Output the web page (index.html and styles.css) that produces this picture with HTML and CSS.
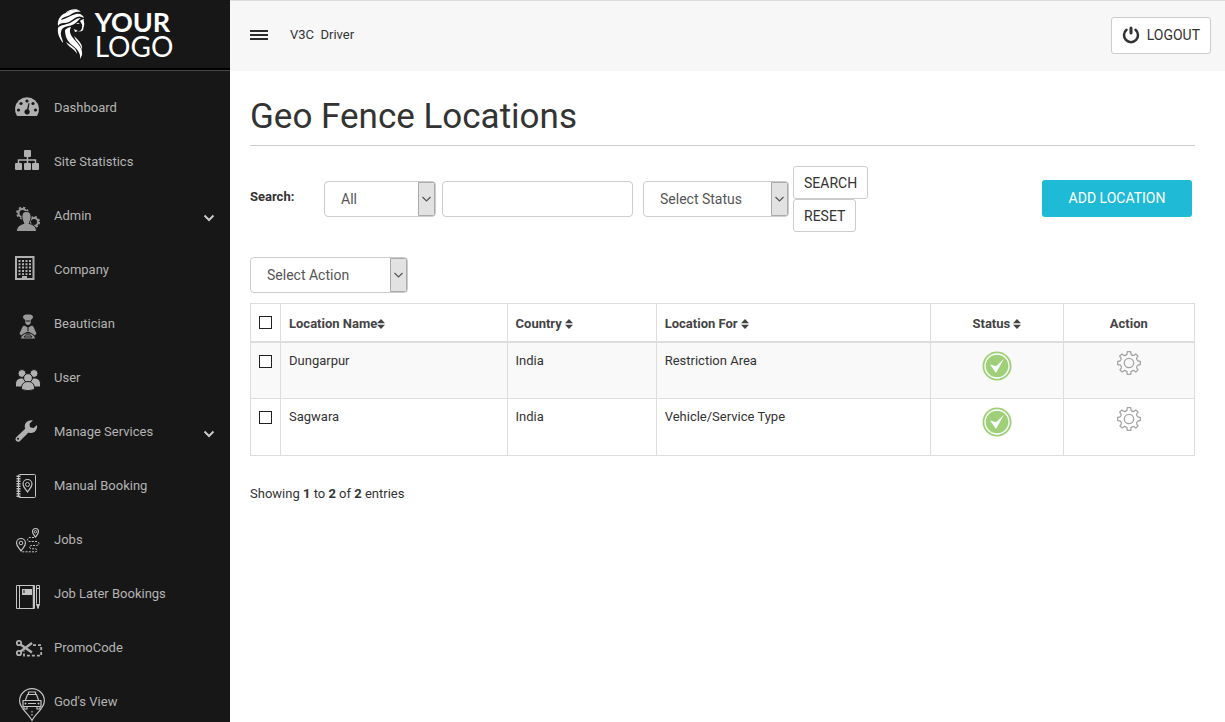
FILE: index.html
```html
<!DOCTYPE html>
<html lang="en">
<head>
<meta charset="utf-8">
<meta name="viewport" content="width=device-width, initial-scale=1">
<title>Geo Fence Locations</title>
<link rel="stylesheet" href="styles.css">
</head>
<body>
<svg class="defs" aria-hidden="true">
  <symbol id="sort" viewBox="0 0 8 10"><path d="M4 0L8 4.2H0zM0 5.8h8L4 10z"/></symbol>
  <symbol id="chevron" viewBox="0 0 12 8"><path d="M1.500 1.500L6 6l4.500-4.500" fill="none" stroke="currentColor" stroke-width="2"/></symbol>
  <symbol id="tick" viewBox="0 0 30 30">
    <circle cx="15" cy="15" r="14.500" fill="#9fd079"/>
    <circle cx="15" cy="15" r="12" fill="none" stroke="#fff" stroke-width="1.300"/>
    <path d="M8 13.500l6 1.800 7.800-7.300L14 22z" fill="#fff"/>
  </symbol>
  <symbol id="gear" viewBox="0 0 24 24">
    <g fill="none" stroke="#a4a4a4" stroke-width="1.300" stroke-linejoin="round">
      <path d="M10 3.200L10.300.7h3.400l.3 2.500q1.600 1.700 2.800 1.200l2-1.500 2.300 2.300-1.500 2q-.4 1.400 1.500 2.800l2.200.3v3.400l-2.200.3q-1.900 1.400-1.500 2.800l1.500 2-2.300 2.300-2-1.500q-1.200-.5-2.800 1.200l-.3 2.500h-3.400l-.3-2.500q-1.600-1.700-2.800-1.200l-2 1.500-2.300-2.300 1.500-2q.4-1.400-1.200-2.800L.7 13.700v-3.400l2.200-.3q1.600-1.400 1.200-2.800l-1.500-2 2.300-2.300 2 1.500Q8.400 4.900 10 3.200z"/>
      <circle cx="12" cy="12" r="4.700"/>
    </g>
  </symbol>
</svg>

<aside class="sidebar">
  <a class="brand" href="#" aria-label="Your logo">
    <svg class="brand-mark" viewBox="0 0 28 50" fill="#fff" aria-hidden="true">
      <path d="M1 17C0 10 4 5 11 3 15 1 20 0 24 3c-5-1-8 1-11 3-4 2-8 2-9 5 5-1 10-5 15-6 4-1 7 1 8 4-3-2-6-2-9 0-4 3-7 5-11 5-3 0-5 1-6 3z"/>
      <path d="M8 4C12 0 20-1 23 2 18 0 13 2 8 4z"/>
      <path d="M1 19c2-3 6-3 9-4 5-1 8-6 14-6-3 2-5 6-9 7-5 2-10 1-11 7-1 4 2 7 2 11-3-4-6-9-5-15z"/>
      <path d="M8 21c2-2 4-3 6-3-2 4-1 7 2 11 5 6 10 10 9 17l-2 4c1-6-3-10-8-14C10 32 8 27 8 21z"/>
      <path d="M9 33c4 3 11 6 11 12-2-5-9-7-11-12zM17 27c5 5 9 8 8 14-1-6-6-8-8-14z"/>
      <path d="M23 12c1-1 3-2 4-2-1 2 1 4 0 7-1 2 0 4-2 5l-4 1c3-1 4-3 4-5 1-2-1-4-2-6zM19 14l4 0-2 1zM17 20l4 2-3 1z"/>
    </svg>
    <span class="brand-name"><b>YOUR</b><span>LOGO</span></span>
  </a>
  <nav class="nav">
    <a href="#"><svg class="nav-icon" viewBox="0 0 54 54" aria-hidden="true"><path fill="currentColor" d="M17 35a12 12 0 1 1 20 0z"/><g fill="#171717"><circle cx="18.500" cy="29" r="1.600"/><circle cx="21" cy="22.500" r="1.600"/><circle cx="27" cy="20" r="1.600"/><circle cx="33" cy="22.500" r="1.600"/><circle cx="35.500" cy="29" r="1.600"/><path d="M28.500 22l1 .4-1 6.200a2.700 2.700 0 1 1-1.500-.4z"/></g></svg>Dashboard</a>
    <a href="#"><svg class="nav-icon" viewBox="0 0 54 54" aria-hidden="true"><g fill="currentColor"><rect x="24" y="15" width="7" height="7" rx="1"/><rect x="15" y="28" width="7" height="7" rx="1"/><rect x="24" y="28" width="7" height="7" rx="1"/><rect x="32" y="28" width="7" height="7" rx="1"/></g><path d="M27.500 21v8M18.500 29v-4h17v4" fill="none" stroke="currentColor" stroke-width="1.500"/></svg>Site Statistics</a>
    <a href="#"><svg class="nav-icon dim" viewBox="0 0 54 54" aria-hidden="true"><g fill="none" stroke="currentColor"><circle cx="22.500" cy="24" r="4" stroke-width="2"/><circle cx="22.500" cy="24" r="5.500" stroke-width="1.800" stroke-dasharray="2.300 2"/><circle cx="34" cy="33" r="4" stroke-width="2"/><circle cx="34" cy="33" r="5.200" stroke-width="1.800" stroke-dasharray="2.200 1.900"/></g><path d="M26 22.500c4 0 5.300 2.800 5 6-.2 2.700-1.300 4.800-2 5.800 3 1.500 7.500 2.200 7.500 8.200h-20c0-6 4.500-6.700 7.500-8.200-.7-1-1.800-3.100-2-5.800-.3-3.200 1-6 4-6z" fill="currentColor" stroke="#171717"/></svg>Admin<svg class="nav-more" aria-hidden="true"><use href="#chevron"/></svg></a>
    <a href="#"><svg class="nav-icon" viewBox="0 0 54 54" aria-hidden="true"><path d="M16 14h17.500v22H16z" fill="none" stroke="currentColor" stroke-width="2"/><path d="M19.500 17v15M23 17v15M26.500 17v15M30 17v15" fill="none" stroke="currentColor" stroke-width="2" stroke-dasharray="2 1.300"/><path d="M22 33h5v3h-5z" fill="currentColor"/></svg>Company</a>
    <a href="#"><svg class="nav-icon dim" viewBox="0 0 54 54" aria-hidden="true"><path fill="currentColor" d="M23 20c0-2 2-2.500 5-2.500s5 .5 5 2.500c0 1.500-1.500 2-2 3l-.2 2c0 2-1.500 3-2.800 3s-2.800-1-2.800-3l-.2-2c-.5-1-2-1.500-2-3zM24 28.500l4 2 4-2c2 1 2.500 4 4.500 8l-1.500 2-5-3-2-1-2 1-5 3-1.500-2c2-4 2.500-7 4.500-8z"/><path d="M20.500 42c1-8 14-8 15 0z" fill="currentColor" stroke="#171717"/><path d="M25.500 24h5M24 40c1-3 7-3 8 0zM28 29v5" fill="none" stroke="#171717"/></svg>Beautician</a>
    <a href="#"><svg class="nav-icon" viewBox="0 0 54 54" aria-hidden="true"><g fill="currentColor" stroke="#171717"><circle cx="22" cy="22.500" r="4"/><circle cx="34" cy="22.500" r="4"/><path d="M15.500 36v-3c0-4 3-6 6-6s6 2 6 6v3zM28.500 36v-3c0-4 3-6 6-6s6 2 6 6v3z"/><circle cx="28" cy="27" r="4.400"/><path d="M21.500 37c0-4 3-6.500 6.500-6.500s6.500 2.500 6.500 6.500v1.500q-6.500 2.500-13 0z"/></g></svg>User</a>
    <a href="#"><svg class="nav-icon" viewBox="0 0 54 54" aria-hidden="true"><path fill="currentColor" fill-rule="evenodd" d="M33 15.300l-3.500 3.500.5 3.500 3.500.7 3.500-3c.8 3.500-1.500 8-6 8-1 0-1.800 0-2.500-.5l-8.500 8.500c-1.200 1.200-2.800 1-3.800 0s-1-2.600 0-3.700l9-8.600c-1.700-5 2-9.300 7.800-8.400zM18 32.800a1 1 0 1 0 .1 2 1 1 0 0 0 0-2z"/></svg>Manage Services<svg class="nav-more" aria-hidden="true"><use href="#chevron"/></svg></a>
    <a href="#"><svg class="nav-icon light" viewBox="0 0 54 54" aria-hidden="true"><g fill="none" stroke="currentColor"><rect x="18.500" y="15.500" width="17" height="23" rx="1"/><path d="M18.500 16.500v22" stroke-width="4" stroke-dasharray="1.500 1"/><path d="M27.500 33c-2-3-4.500-5-4.500-8a4.500 4.500 0 0 1 9 0c0 3-2.500 5-4.500 8z" stroke-width="1.200"/><circle cx="27.500" cy="25.500" r="2"/></g></svg>Manual Booking</a>
    <a href="#"><svg class="nav-icon light" viewBox="0 0 54 54" aria-hidden="true"><g fill="none" stroke="currentColor"><path d="M21 38c-2-3-4.500-5-4.500-8a4.500 4.500 0 0 1 9 0c0 3-2.500 5-4.500 8z" stroke-width="1.200"/><circle cx="21" cy="30" r="1.800"/><path d="M35.500 24c-1.500-2-3-3.500-3-5.500a3 3 0 0 1 6 0c0 2-1.500 3.500-3 5.500z" stroke-width="1.200"/><circle cx="35.500" cy="18.700" r="1.200"/><path d="M34 24.500h-5q-3 2.500 0 4h8q4 2 0 4h-6q-3 1.500 0 3.300h5q2 2 0 3H21" stroke-dasharray="2 1.200"/></g></svg>Jobs</a>
    <a href="#"><svg class="nav-icon light" viewBox="0 0 54 54" aria-hidden="true"><g fill="none" stroke="currentColor"><path d="M16.500 18.500h18v23h-18zM19.500 18v24"/><path d="M33.500 18v24" stroke-width="1.500"/><path d="M36.500 18.500h3v18l-1.500 5-1.500-5zM36 21.500h4"/></g><path d="M22 22h10v6H22zM36 37h4l-2 5z" fill="currentColor"/><path d="M24 23v3" stroke="#171717"/></svg>Job Later Bookings</a>
    <a href="#"><svg class="nav-icon" viewBox="0 0 54 54" aria-hidden="true"><g fill="none" stroke="currentColor" stroke-width="1.800"><circle cx="19" cy="22" r="2.200"/><circle cx="19" cy="32" r="2.200"/><path d="M20.500 23.500L32 31.500M20.500 30.500L32 22" stroke-width="2.400"/><path d="M33 24.200h8.200v10.500H24v-5" stroke-dasharray="3 2"/></g></svg>PromoCode</a>
    <a href="#"><svg class="nav-icon light" viewBox="0 0 54 54" aria-hidden="true"><g fill="none" stroke="currentColor" stroke-width="1.200"><path d="M32 45.500c-3.500-7-12.400-12-12.400-19.500a12.400 12.400 0 0 1 24.800 0c0 7.500-8.900 12.500-12.400 19.500z"/><path d="M28.500 19v-2h7v2M25.500 25l2-5.500h9l2 5.500M23 25.500h18v6H23zM24 31.500v2.500h3v-2.500M37 31.500v2.500h3v-2.500M28 28.500h8"/><path d="M32 36v6" stroke-dasharray="1.500 1.500"/></g><circle cx="25.500" cy="28.500" r="1" fill="currentColor"/><circle cx="38.500" cy="28.500" r="1" fill="currentColor"/></svg>God's View</a>
  </nav>
</aside>

<div class="page">
  <header class="topbar">
    <button class="menu-btn" type="button" aria-label="Toggle menu"><svg viewBox="0 0 18 10" aria-hidden="true"><path d="M0 1h18M0 5h18M0 9h18" stroke="#2b2b2b" stroke-width="2"/></svg></button>
    <span class="user">V3C&nbsp; Driver</span>
    <button class="btn logout" type="button"><svg viewBox="0 0 18 18" fill="none" stroke="#333" stroke-width="2.500" stroke-linecap="round" aria-hidden="true"><path d="M4.500 3.800a7 7 0 1 0 9 0"/><path d="M9 2v5" stroke-width="3"/></svg>LOGOUT</button>
  </header>

  <main class="content">
    <h1>Geo Fence Locations</h1>
    <form class="filters">
      <label class="search-label" for="keyword">Search:</label>
      <select class="field field-column" aria-label="Search column"><option>All</option></select>
      <input class="field field-keyword" id="keyword" type="text">
      <select class="field field-status" aria-label="Status"><option>Select Status</option></select>
      <div class="filter-buttons">
        <button class="btn" type="button">SEARCH</button>
        <button class="btn" type="reset">RESET</button>
      </div>
      <a class="add-btn" href="#">ADD LOCATION</a>
    </form>

    <select class="field field-action" aria-label="Select action"><option>Select Action</option></select>

    <table class="locations">
      <colgroup><col class="c-check"><col class="c-name"><col class="c-country"><col class="c-for"><col class="c-status"><col></colgroup>
      <thead>
        <tr>
          <th class="check"><input type="checkbox" aria-label="Select all"></th>
          <th><a href="#">Location Name<svg class="sort" aria-hidden="true"><use href="#sort"/></svg></a></th>
          <th><a href="#">Country <svg class="sort" aria-hidden="true"><use href="#sort"/></svg></a></th>
          <th><a href="#">Location For <svg class="sort" aria-hidden="true"><use href="#sort"/></svg></a></th>
          <th class="mid"><a href="#">Status <svg class="sort" aria-hidden="true"><use href="#sort"/></svg></a></th>
          <th class="mid">Action</th>
        </tr>
      </thead>
      <tbody>
        <tr>
          <td class="check"><input type="checkbox" aria-label="Select Dungarpur"></td>
          <td>Dungarpur</td><td>India</td><td>Restriction Area</td>
          <td class="mid"><svg class="tick" role="img" aria-label="Active"><use href="#tick"/></svg></td>
          <td class="mid"><button class="gear-btn" type="button" aria-label="Actions for Dungarpur"><svg><use href="#gear"/></svg></button></td>
        </tr>
        <tr>
          <td class="check"><input type="checkbox" aria-label="Select Sagwara"></td>
          <td>Sagwara</td><td>India</td><td>Vehicle/Service Type</td>
          <td class="mid"><svg class="tick" role="img" aria-label="Active"><use href="#tick"/></svg></td>
          <td class="mid"><button class="gear-btn" type="button" aria-label="Actions for Sagwara"><svg><use href="#gear"/></svg></button></td>
        </tr>
      </tbody>
    </table>
    <p class="summary">Showing <b>1</b> to <b>2</b> of <b>2</b> entries</p>
  </main>
</div>
</body>
</html>
```
FILE: styles.css
```css
* { box-sizing: border-box; }

body {
  margin: 0;
  display: flex;
  height: 100vh;
  overflow: hidden;
  background: #fff;
  color: #333;
  font: 13px/20px Roboto, "Open Sans", sans-serif;
}

a { color: inherit; text-decoration: none; }
button, input, select { font: inherit; color: inherit; margin: 0; }
svg { display: block; }
.defs { position: absolute; width: 0; height: 0; }

/* Sidebar */
.sidebar {
  flex: 0 0 230px;
  height: 100vh;
  overflow: hidden;
  background: #171717;
  color: #b4b4b4;
}
.brand {
  display: flex;
  justify-content: center;
  align-items: center;
  gap: 10px;
  height: 70px;
  border-bottom: 2px solid #000;
  color: #fff;
}
.brand-mark { width: 28px; height: 50px; }
.brand-name {
  display: flex;
  flex-direction: column;
  font: 28px/25px Lato, sans-serif;
}
.brand-name b { font-size: 27px; font-weight: 700; }
.nav { border-top: 1px solid #484848; padding-top: 10px; }
.nav a {
  display: flex;
  align-items: center;
  height: 54px;
  padding-right: 15px;
}
.nav-icon { width: 54px; height: 54px; flex: none; color: #b0b0b0; }
.nav-icon.dim { color: #999; }
.nav-icon.light { color: #c4c4c4; }
.nav-more { width: 12px; height: 8px; margin: 4px 0 0 auto; color: #c8c8c8; }

/* Top bar */
.page { flex: 1; min-width: 0; }
.topbar {
  display: flex;
  align-items: center;
  height: 71px;
  padding: 0 14px 2px 20px;
  border-top: 1px solid #ddd;
  background: #f7f7f7;
}
.menu-btn { padding: 0; border: 0; background: none; }
.menu-btn svg { width: 18px; height: 10px; }
.user { margin-left: 22px; }
.btn {
  height: 33px;
  padding: 0 10px;
  border: 1px solid #ccc;
  border-radius: 3px;
  background: #fff;
  font-size: 14px;
}
.logout {
  display: flex;
  align-items: center;
  gap: 7px;
  height: 37px;
  margin-left: auto;
}
.logout svg { width: 18px; height: 18px; }

/* Content */
.content { padding: 20px 30px 20px 20px; }
h1 {
  margin: 0 0 20px;
  padding: 4px 0 6px;
  border-bottom: 1px solid #ccc;
  font-size: 35px;
  font-weight: 400;
  line-height: 44px;
}
.filters { display: flex; align-items: center; padding-right: 3px; }
.search-label { width: 74px; padding-bottom: 5px; font-weight: 700; }
.field {
  height: 36px;
  padding: 0 16px;
  border: 1px solid #ccc;
  border-radius: 4px;
  background: #fff;
  color: #555;
  font-size: 14px;
}
select.field {
  appearance: none;
  background: #fff url("data:image/svg+xml,%3Csvg xmlns='http://www.w3.org/2000/svg' width='17' height='34'%3E%3Cpath d='M.5.5h16v33H.5z' fill='%23e2e2e2' stroke='%23aaa'/%3E%3Cpath d='M4.500 15l4 4 4-4' fill='none' stroke='%23555' stroke-width='1.200'/%3E%3C/svg%3E") right center no-repeat;
}
.field-column { width: 112px; margin-right: 6px; }
.field-keyword { width: 191px; margin-right: 10px; }
.field-status { width: 146px; margin-right: 4px; }
.filter-buttons { display: flex; flex-direction: column; align-items: flex-start; }
.add-btn {
  min-width: 150px;
  margin: 0 0 2px auto;
  padding: 8px 16px;
  border-radius: 3px;
  background: #1fbad6;
  color: #fff;
  font-size: 14px;
  line-height: 21px;
  text-align: center;
}
.field-action { display: block; width: 158px; margin: 25px 0 10px; }

/* Table */
.locations { width: 100%; border-collapse: collapse; table-layout: fixed; }
.c-check { width: 30px; }
.c-name { width: 24%; }
.c-country { width: 15.8%; }
.c-for { width: 29.1%; }
.c-status { width: 14%; }
.locations th, .locations td {
  padding: 8px;
  border: 1px solid #ddd;
  text-align: left;
  vertical-align: top;
}
.locations th {
  height: 38px;
  padding: 10px 8px 6px;
  border-bottom-width: 2px;
  color: #444;
}
.locations td { height: 57px; }
.locations .mid { text-align: center; }
.locations tbody tr:nth-child(odd) { background: #f9f9f9; }
.locations td.check { padding-top: 12px; }
.locations th.check { padding-top: 12px; }
.check input {
  appearance: none;
  display: block;
  width: 13px;
  height: 13px;
  border: 1px solid #222;
  background: #fff;
}
.sort { display: inline-block; width: 8px; height: 10px; fill: #444; vertical-align: -1px; }
.tick { width: 30px; height: 30px; margin: 0 auto; }
.gear-btn { padding: 0; border: 0; background: none; }
.gear-btn svg { width: 24px; height: 24px; }
.summary { margin: 28px 0 0; }
```
